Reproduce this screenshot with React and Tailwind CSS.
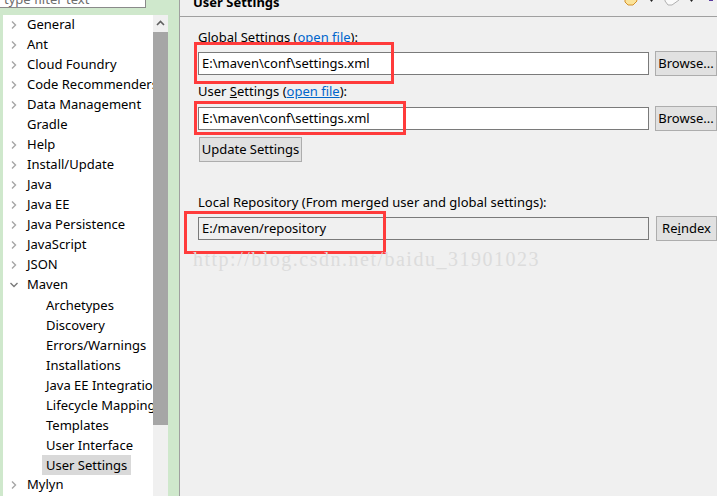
import React from "react";

const FONT = { fontFamily: '"Noto Sans", "Liberation Sans", sans-serif' };

const TREE = [
  { label: "General", kind: "closed" },
  { label: "Ant", kind: "closed" },
  { label: "Cloud Foundry", kind: "closed" },
  { label: "Code Recommenders", kind: "closed" },
  { label: "Data Management", kind: "closed" },
  { label: "Gradle", kind: "leaf" },
  { label: "Help", kind: "closed" },
  { label: "Install/Update", kind: "closed" },
  { label: "Java", kind: "closed" },
  { label: "Java EE", kind: "closed" },
  { label: "Java Persistence", kind: "closed" },
  { label: "JavaScript", kind: "closed" },
  { label: "JSON", kind: "closed" },
  { label: "Maven", kind: "open" },
  { label: "Archetypes", kind: "child" },
  { label: "Discovery", kind: "child" },
  { label: "Errors/Warnings", kind: "child" },
  { label: "Installations", kind: "child" },
  { label: "Java EE Integration", kind: "child" },
  { label: "Lifecycle Mapping", kind: "child" },
  { label: "Templates", kind: "child" },
  { label: "User Interface", kind: "child" },
  { label: "User Settings", kind: "child", selected: true },
  { label: "Mylyn", kind: "closed" },
];

function Chevron({ open }) {
  return (
    <svg width="10" height="10" viewBox="0 0 10 10" className="shrink-0">
      {open ? (
        <path d="M1.5 3 L5 6.5 L8.5 3" fill="none" stroke="#7a7a7a" strokeWidth="1.4" />
      ) : (
        <path d="M3 1.5 L6.5 5 L3 8.5" fill="none" stroke="#a6a6a6" strokeWidth="1.4" />
      )}
    </svg>
  );
}

function TreeRow({ item }) {
  if (item.kind === "child") {
    return (
      <div className="h-[20px] flex items-center pl-[39px]">
        <span
          className={
            "h-[20px] leading-[20px] px-[4px] whitespace-nowrap " +
            (item.selected ? "bg-[#d9d9d9]" : "")
          }
        >
          {item.label}
        </span>
      </div>
    );
  }
  return (
    <div className="h-[20px] flex items-center pl-[6px] gap-[8px] whitespace-nowrap">
      {item.kind === "leaf" ? <span className="w-[10px] shrink-0" /> : <Chevron open={item.kind === "open"} />}
      <span>{item.label}</span>
    </div>
  );
}

function TextBox({ value, readOnly }) {
  return (
    <div
      className={
        "h-[23px] w-[451px] border border-[#7a7a7a] flex items-center pl-[3px] " +
        (readOnly ? "bg-[#f0f0f0]" : "bg-white")
      }
    >
      {value}
    </div>
  );
}

function Button({ children, className = "" }) {
  return (
    <div
      className={
        "h-[25px] border border-[#adadad] bg-[#e1e1e1] flex items-center justify-center " + className
      }
    >
      {children}
    </div>
  );
}

function Toolbar() {
  return (
    <svg width="100" height="10" viewBox="0 0 100 10" className="absolute right-0 top-0">
      <path d="M8 -4 L18 -4 L20 1 L16 5 L11 5 L8 2 Z" fill="#fbe39a" stroke="#d4912c" strokeWidth="1" />
      <path d="M33 0 L36 0 L34.5 2 Z" fill="#222" />
      <path d="M48 -4 L58 -4 L62 0 L55 5 L51 5 L48 1 Z" fill="#fafafa" stroke="#b0b0b0" strokeWidth="1" />
      <path d="M73 0 L76 0 L74.5 2 Z" fill="#222" />
      <path d="M92 -3 L96 -3 L96 1 L92 1 Z" fill="#5b3c9e" />
    </svg>
  );
}

export default function App() {
  return (
    <div
      className="w-[717px] h-[496px] flex overflow-hidden bg-[#f0f0f0] text-[13px] text-black"
      style={FONT}
    >
      {/* left preference tree */}
      <div className="w-[179px] shrink-0 bg-[#cfe8cc] flex flex-col">
        <div className="h-[15px]">
          <div className="h-[8px] w-[146px] bg-white border-r border-b border-[#8a8a8a] overflow-hidden">
            <div className="-mt-[9px] pl-[4px] text-[#6d6d6d] leading-[16px]">type filter text</div>
          </div>
        </div>
        <div className="flex-1 flex min-h-0 pl-[3px]">
          <div className="w-[150px] bg-white overflow-hidden">
            {TREE.map((item) => (
              <TreeRow key={item.label} item={item} />
            ))}
          </div>
          <div className="w-[15px] bg-[#f0f0f0] flex flex-col items-center">
            <svg width="15" height="17" viewBox="0 0 15 17">
              <path d="M4 10 L7.5 6.5 L11 10" fill="none" stroke="#606060" strokeWidth="1.6" />
            </svg>
            <div className="w-[15px] h-[393px] bg-[#a6a6a6]" />
          </div>
        </div>
      </div>
      <div className="w-px bg-[#a0a0a0] shrink-0" />

      {/* right page */}
      <div className="flex-1 relative">
        <div className="h-[17px] border-b border-[#a0a0a0] relative flex flex-col overflow-hidden">
          <div className="pl-[13px] -mt-[8px] font-bold leading-[20px]">User Settings</div>
          <Toolbar />
        </div>

        <div className="pl-[18px]">
          <div className="mt-[10px] h-[20px] leading-[20px]">
            Global Settings (<span className="text-[#0066cc] underline">open file</span>):
          </div>
          <div className="mt-[4px] flex items-center gap-[6px]">
            <TextBox value="E:\maven\conf\settings.xml" />
            <Button className="w-[62px]">Browse...</Button>
          </div>

          <div className="mt-[5px] h-[20px] leading-[20px]">
            User <span className="underline">S</span>ettings (<span className="text-[#0066cc] underline">open file</span>):
          </div>
          <div className="mt-[5px] flex items-center gap-[6px]">
            <TextBox value="E:\maven\conf\settings.xml" />
            <Button className="w-[62px]">Browse...</Button>
          </div>

          <Button className="mt-[6px] ml-[1px] w-[103px]">Update Settings</Button>

          <div className="mt-[30px] h-[20px] leading-[20px]">
            Local Repository (From merged user and global settings):
          </div>
          <div className="mt-[4px] flex items-center gap-[7px]">
            <TextBox value="E:/maven/repository" readOnly />
            <Button className="w-[61px]">
              Re<span className="underline">i</span>ndex
            </Button>
          </div>
        </div>

        {/* annotations */}
        <div className="absolute left-[14px] top-[42px] w-[200px] h-[42px] border-[3px] border-[#ff3b3b]" />
        <div className="absolute left-[14px] top-[101px] w-[212px] h-[34px] border-[3px] border-[#ff3b3b]" />
        <div className="absolute left-[4px] top-[211px] w-[202px] h-[43px] border-[3px] border-[#ff3b3b]" />
        <div
          className="absolute left-[13px] top-[245px] text-[20px] tracking-[1.5px] text-[#dcdcdc] whitespace-nowrap leading-[28px]"
          style={{ fontFamily: '"Liberation Serif", serif' }}
        >
          http://blog.csdn.net/baidu_31901023
        </div>
      </div>
    </div>
  );
}
